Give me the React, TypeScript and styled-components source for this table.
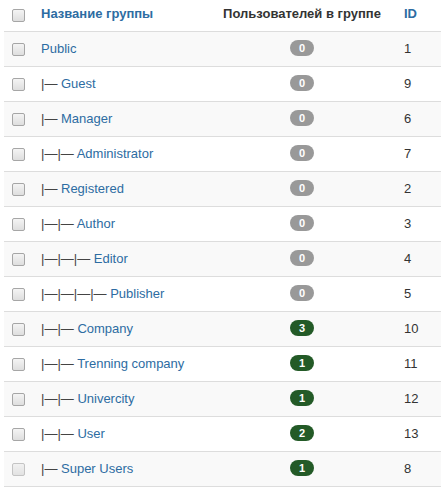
import React from "react";
import styled, { createGlobalStyle } from "styled-components";

const Global = createGlobalStyle`
  html, body { margin: 0; padding: 0; background: #fff; }
  body { font-family: "Liberation Sans", Arial, Helvetica, sans-serif; font-size: 13px; line-height: 18px; color: #333; }
`;

const Wrap = styled.div`
  padding: 0 6px 0 4px;
  width: 437px;
`;

const Table = styled.table`
  width: 437px;
  border-collapse: collapse;
  table-layout: fixed;
  border-bottom: 1px solid #ddd;
`;

const Col = styled.col<{ $w: number }>`
  width: ${(p) => p.$w}px;
`;

const Th = styled.th<{ $align?: string; $link?: boolean }>`
  padding: 5px 8px 8px;
  text-align: ${(p) => p.$align || "left"};
  font-weight: bold;
  color: ${(p) => (p.$link ? "#2d6ca2" : "#333")};
  vertical-align: bottom;
  white-space: nowrap;
`;

const CheckTh = styled(Th)`
  padding: 0;
  vertical-align: middle;
`;

const Row = styled.tr<{ $striped: boolean }>`
  background: ${(p) => (p.$striped ? "#f9f9f9" : "#fff")};
`;

const Td = styled.td<{ $align?: string }>`
  border-top: 1px solid #ddd;
  padding: 8px;
  text-align: ${(p) => p.$align || "left"};
  vertical-align: top;
  white-space: nowrap;
`;

const CheckCell = styled(Td)`
  padding: 0;
  vertical-align: middle;
`;

const Box = styled.input`
  appearance: none;
  -webkit-appearance: none;
  display: block;
  margin: 0 0 0 8px;
  width: 13px;
  height: 13px;
  border: 1px solid #a6a6a6;
  border-radius: 2px;
  background: linear-gradient(#f4f4f4, #dedede);
  box-sizing: border-box;
  &:disabled {
    border-color: #c4c4c4;
    background: linear-gradient(#f1f1f1, #e2e2e2);
  }
`;

const Prefix = styled.span`
  color: #444;
`;

const Name = styled.a`
  color: #2d6ca2;
  text-decoration: none;
`;

const Badge = styled.span<{ $green: boolean }>`
  display: inline-block;
  min-width: 8px;
  padding: 2px 8px;
  border-radius: 9px;
  background: ${(p) => (p.$green ? "#235a27" : "#999")};
  color: #fff;
  font-size: 11px;
  font-weight: bold;
  line-height: 12px;
  vertical-align: 1px;
`;

const rows: [string, number, number, number][] = [
  ["Public", 0, 0, 1],
  ["Guest", 1, 0, 9],
  ["Manager", 1, 0, 6],
  ["Administrator", 2, 0, 7],
  ["Registered", 1, 0, 2],
  ["Author", 2, 0, 3],
  ["Editor", 3, 0, 4],
  ["Publisher", 4, 0, 5],
  ["Company", 2, 3, 10],
  ["Trenning company", 2, 1, 11],
  ["Univercity", 2, 1, 12],
  ["User", 2, 2, 13],
  ["Super Users", 1, 1, 8],
];

export default function App() {
  return (
    <Wrap>
      <Global />
      <Table>
        <colgroup>
          <Col $w={29} />
          <Col $w={175} />
          <Col $w={188} />
          <Col $w={45} />
        </colgroup>
        <thead>
          <tr>
            <CheckTh>
              <Box type="checkbox" />
            </CheckTh>
            <Th $link>Название группы</Th>
            <Th $align="center">Пользователей в группе</Th>
            <Th $link>ID</Th>
          </tr>
        </thead>
        <tbody>
          {rows.map(([name, level, count, id], i) => (
            <Row key={id} $striped={i % 2 === 0}>
              <CheckCell>
                <Box type="checkbox" disabled={i === rows.length - 1} />
              </CheckCell>
              <Td>
                {level > 0 && <Prefix>{"|—".repeat(level) + " "}</Prefix>}
                <Name href="#">{name}</Name>
              </Td>
              <Td $align="center">
                <Badge $green={count > 0}>{count}</Badge>
              </Td>
              <Td>{id}</Td>
            </Row>
          ))}
        </tbody>
      </Table>
    </Wrap>
  );
}
